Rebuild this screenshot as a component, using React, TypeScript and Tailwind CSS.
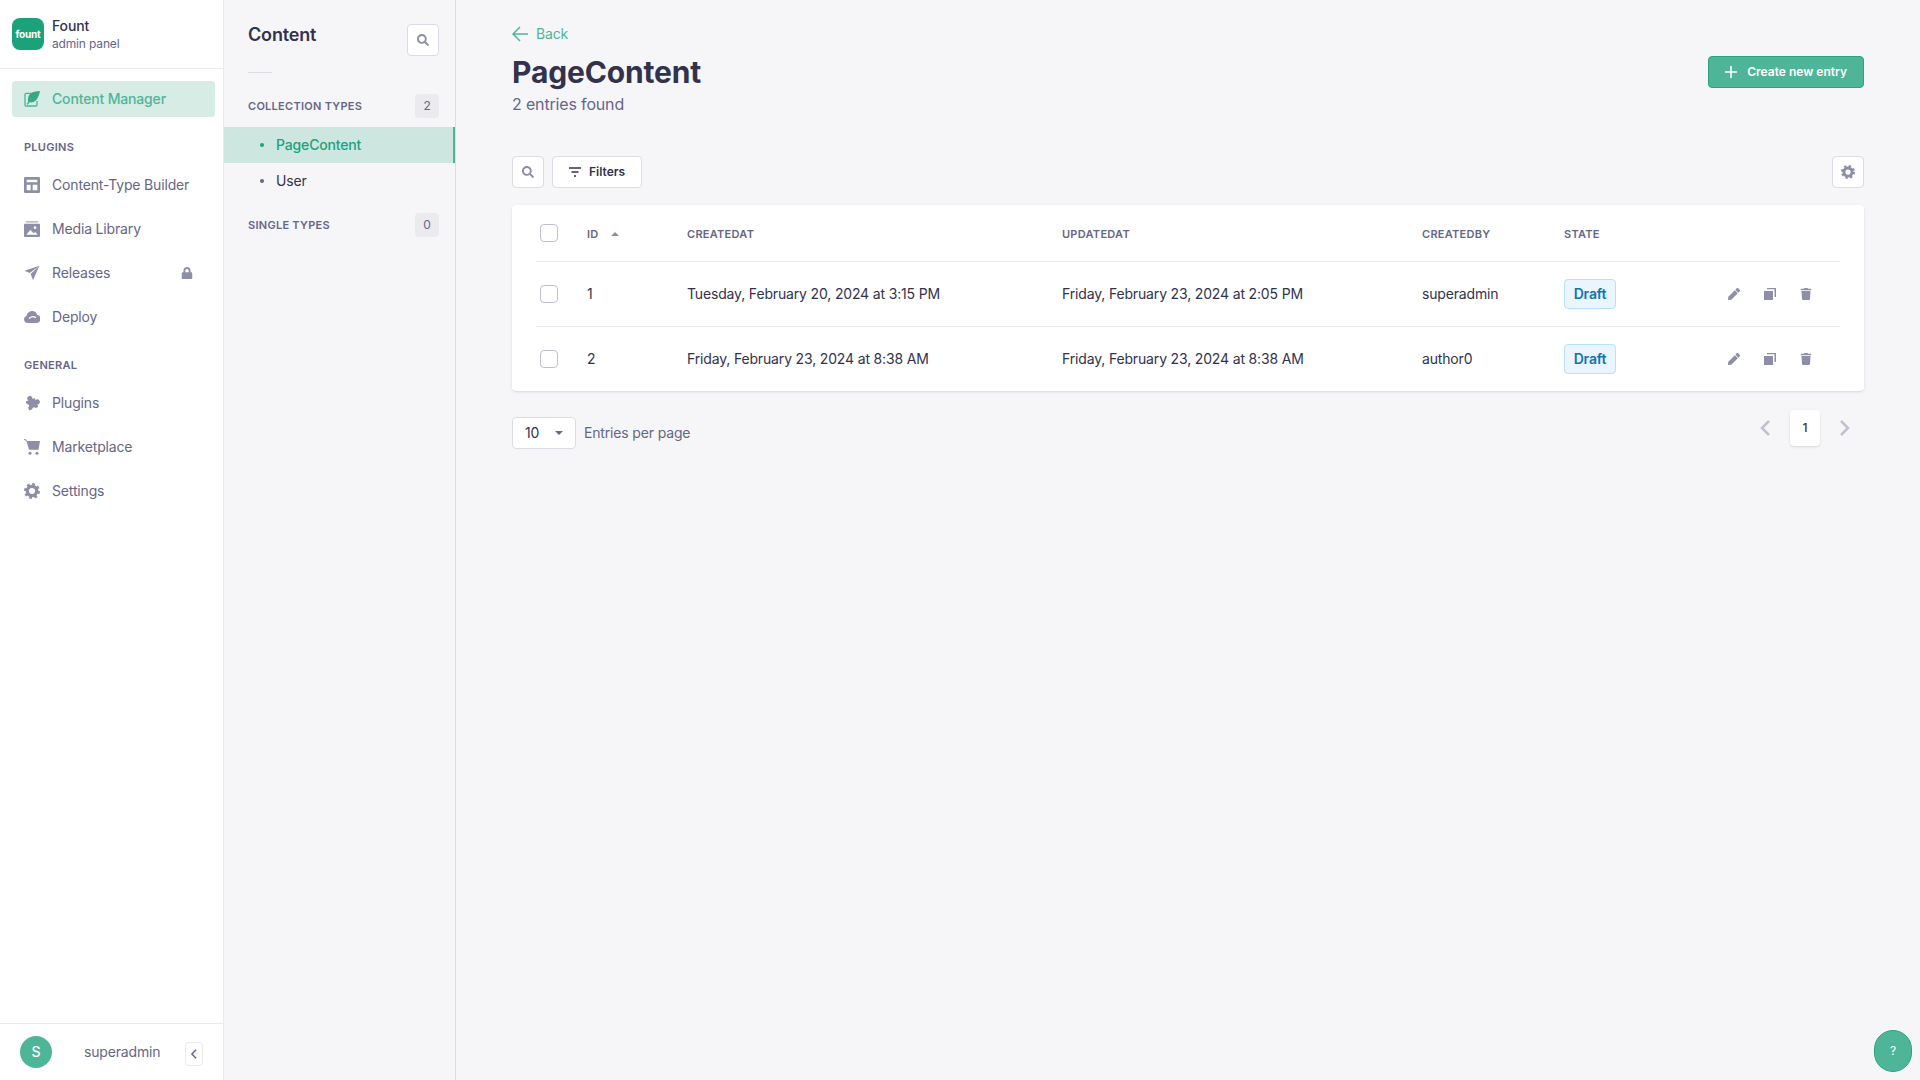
import type { ReactNode } from "react"
import { FaLock, FaPen, FaSearch, FaTrash } from "react-icons/fa"

function WriteIcon() {
  return (
    <svg viewBox="0 0 24 24" className="size-4 shrink-0">
      <path d="M11 3.500H3A1.500 1.500 0 0 0 1.500 5v16A1.500 1.500 0 0 0 3 22.500h15a1.500 1.500 0 0 0 1.500-1.500v-6" fill="none" stroke="currentColor" strokeWidth="2" />
      <path d="M24 0C14 .5 8 3 6.500 9 5.700 12 6 14.500 6.300 16L4 19.500l1.500 1 2.800-3.500C16 18.500 22 12 24 0z" fill="#36a886" />
    </svg>
  )
}

function LayoutIcon() {
  return (
    <svg viewBox="0 0 24 24" className="size-4 shrink-0 fill-current">
      <path fillRule="evenodd" d="M2 0h20a2 2 0 0 1 2 2v20a2 2 0 0 1-2 2H2a2 2 0 0 1-2-2V2a2 2 0 0 1 2-2zM4 4v4h16V4zM4 11.500V20h6v-8.500zM13 11.500V20h7v-8.500z" />
    </svg>
  )
}

function MediaIcon() {
  return (
    <svg viewBox="0 0 24 24" className="size-4 shrink-0 fill-current">
      <path d="M3 0h18v2.500H3z" opacity="0.6" />
      <path fillRule="evenodd" d="M1.500 4h21A1.500 1.500 0 0 1 24 5.500v17a1.500 1.500 0 0 1-1.500 1.500h-21A1.500 1.500 0 0 1 0 22.500v-17A1.500 1.500 0 0 1 1.500 4zM16.500 8a2 2 0 1 0 0 4 2 2 0 0 0 0-4zM3.500 20.500h17l-3.500-4-2.500 2-5-5.500z" />
    </svg>
  )
}

function PlaneIcon() {
  return (
    <svg viewBox="0 0 24 24" className="size-4 shrink-0 fill-current">
      <path d="M23 1 1 8.500l7.500 3.500L23 1zM23 1 10 13.500 13.500 23 23 1z" />
    </svg>
  )
}

function CloudIcon() {
  return (
    <svg viewBox="0 0 24 24" className="size-4 shrink-0">
      <path d="M5.500 21A5.500 5.500 0 0 1 3.500 10.400C5 5.500 8.500 3 12.500 3c3.500 0 6 2 7 5.500A6.300 6.300 0 0 1 18.500 21z" fill="currentColor" />
      <path d="M7.500 14.500c2-3 6.500-4 10.500-1.500" fill="none" stroke="white" strokeWidth="2" />
    </svg>
  )
}

function PuzzleIcon() {
  return (
    <svg viewBox="0 0 24 24" className="size-4 shrink-0">
      <g transform="rotate(-22 12 12)">
        <rect x="4" y="6.500" width="14.500" height="14.500" rx="1" fill="currentColor" />
        <circle cx="11.500" cy="4.500" r="3.800" fill="currentColor" />
        <circle cx="20" cy="13.500" r="3.800" fill="currentColor" />
        <circle cx="4" cy="13.500" r="2.600" fill="white" />
        <circle cx="11.500" cy="21.500" r="2.600" fill="white" />
      </g>
    </svg>
  )
}

function CartIcon() {
  return (
    <svg viewBox="0 0 24 24" className="size-4 shrink-0 fill-current">
      <path d="M0 0c2.500.3 4 1 4.800 3H24l-2.200 13H7.500L4 4C3.400 2.500 2 2 0 1.500z" />
      <circle cx="9" cy="21.500" r="2.300" />
      <circle cx="19.500" cy="21.500" r="2.300" />
    </svg>
  )
}

function GearIcon({ className }: { className: string }) {
  return (
    <svg viewBox="0 0 24 24" className={className} fill="none" stroke="currentColor">
      <circle cx="12" cy="12" r="7" strokeWidth="5" />
      <circle cx="12" cy="12" r="10" strokeWidth="4" strokeDasharray="4 3.850" />
    </svg>
  )
}

function CopyIcon() {
  return (
    <svg viewBox="0 0 24 24" className="size-3 fill-current">
      <path d="M0 6h18v18H0z" />
      <path d="M6 0h18v18h-3V2.500H6z" />
    </svg>
  )
}

function NavItem({ icon, label, locked }: { icon: ReactNode; label: string; locked?: boolean }) {
  return (
    <div className="ml-3 mr-2 flex h-9 items-center gap-3 px-3 text-sm text-[#666687]">
      <span className="text-[#8e8ea9]">{icon}</span>
      <span>{label}</span>
      {locked && <FaLock className="ml-auto mr-2.5 size-3 text-[#8e8ea9]" />}
    </div>
  )
}

function NavLabel({ children }: { children: string }) {
  return <div className="mb-3.5 mt-6 h-3 px-6 text-[11px] font-semibold uppercase leading-3 tracking-wide text-[#666687]">{children}</div>
}

function TypeHeading({ label, count }: { label: string; count: number }) {
  return (
    <div className="flex items-center justify-between pl-6 pr-4">
      <span className="text-[11px] font-semibold uppercase tracking-wide text-[#666687]">{label}</span>
      <span className="flex size-6 items-center justify-center rounded bg-[#eaeaef] text-xs text-[#666687]">{count}</span>
    </div>
  )
}

function IconButton({ children }: { children: ReactNode }) {
  return (
    <button className="flex size-8 items-center justify-center rounded border border-[#dcdce4] bg-white text-[#8e8ea9]">
      {children}
    </button>
  )
}

function Checkbox() {
  return <span className="block size-4.5 rounded border border-[#c0c0cf] bg-white" />
}

const grid = "grid grid-cols-[51px_100px_375px_360px_142px_1fr_auto] items-center"

const rows = [
  { id: 1, created: "Tuesday, February 20, 2024 at 3:15 PM", updated: "Friday, February 23, 2024 at 2:05 PM", by: "superadmin" },
  { id: 2, created: "Friday, February 23, 2024 at 8:38 AM", updated: "Friday, February 23, 2024 at 8:38 AM", by: "author0" },
]

export default function App() {
  return (
    <div className="relative flex h-screen overflow-hidden bg-[#f6f6f9] tracking-[-0.01em] [font-family:Inter,sans-serif]">
      <aside className="flex w-56 shrink-0 flex-col border-r border-[#eaeaef] bg-white">
        <div className="flex h-[69px] shrink-0 items-center gap-2 border-b border-[#eaeaef] px-3">
          <div className="flex size-8 items-center justify-center rounded-lg bg-[#1ba27a] text-[10px] font-bold text-white">fount</div>
          <div>
            <div className="text-sm font-medium leading-5 text-[#32324d]">Fount</div>
            <div className="text-xs leading-4 text-[#666687]">admin panel</div>
          </div>
        </div>
        <nav className="flex-1 pt-3">
          <div className="ml-3 mr-2 flex h-9 items-center gap-3 rounded bg-[#d6ece5] px-3 text-sm font-medium text-[#4fb598]">
            <WriteIcon />
            <span>Content Manager</span>
          </div>
          <NavLabel>Plugins</NavLabel>
          <div className="flex flex-col gap-2">
            <NavItem icon={<LayoutIcon />} label="Content-Type Builder" />
            <NavItem icon={<MediaIcon />} label="Media Library" />
            <NavItem icon={<PlaneIcon />} label="Releases" locked />
            <NavItem icon={<CloudIcon />} label="Deploy" />
          </div>
          <NavLabel>General</NavLabel>
          <div className="flex flex-col gap-2">
            <NavItem icon={<PuzzleIcon />} label="Plugins" />
            <NavItem icon={<CartIcon />} label="Marketplace" />
            <NavItem icon={<GearIcon className="size-4 shrink-0" />} label="Settings" />
          </div>
        </nav>
        <div className="flex h-[57px] shrink-0 items-center border-t border-[#eaeaef] pl-5 pr-5">
          <div className="flex size-8 items-center justify-center rounded-full bg-[#4fb598] text-sm font-medium text-white">S</div>
          <span className="ml-8 text-sm text-[#666687]">superadmin</span>
          <button className="ml-auto mt-1 flex h-6 w-4.5 items-center justify-center rounded border border-[#eaeaef] bg-white text-[#666687]">
            <svg viewBox="0 0 8 12" className="h-2.5 w-2" fill="none" stroke="currentColor" strokeWidth="1.800">
              <path d="M6.500 1 1.500 6l5 5" />
            </svg>
          </button>
        </div>
      </aside>

      <section className="w-[232px] shrink-0 border-r border-[#dcdce4] pt-6">
        <div className="flex items-start justify-between pl-6 pr-4">
          <h2 className="mt-px text-lg font-semibold leading-5 text-[#32324d]">Content</h2>
          <IconButton>
            <FaSearch className="size-3" />
          </IconButton>
        </div>
        <div className="ml-6 mt-4 h-px w-6 bg-[#dcdce4]" />
        <div className="mt-5 pt-px">
          <TypeHeading label="Collection Types" count={2} />
        </div>
        <div className="mt-2 pt-px">
          <div className="flex h-9 items-center gap-3 border-r-2 border-[#4fb598] bg-[#cde6e0] pl-9 text-sm font-medium text-[#1ba27a]">
            <span className="size-1 rounded-full bg-[#1ba27a]" />
            PageContent
          </div>
          <div className="flex h-9 items-center gap-3 pl-9 text-sm text-[#32324d]">
            <span className="size-1 rounded-full bg-[#666687]" />
            User
          </div>
        </div>
        <div className="mt-3.5">
          <TypeHeading label="Single Types" count={0} />
        </div>
      </section>

      <main className="min-w-0 flex-1 px-14 pt-6">
        <a className="flex items-center gap-2 text-sm leading-5 text-[#4fb598]">
          <svg viewBox="0 0 16 16" className="size-4" fill="none" stroke="currentColor" strokeWidth="1.500">
            <path d="M16 8H1M8 1 1 8l7 7" />
          </svg>
          Back
        </a>
        <div className="mt-2 flex items-start justify-between">
          <div>
            <h1 className="text-3xl font-bold leading-10 text-[#32324d]">PageContent</h1>
            <p className="text-base text-[#666687]">2 entries found</p>
          </div>
          <button className="mt-1 flex h-8 items-center gap-2.5 rounded border border-[#2aa57f] bg-[#4fb598] px-4 text-xs font-semibold tracking-normal text-white">
            <svg viewBox="0 0 12 12" className="size-3" fill="none" stroke="currentColor" strokeWidth="1.500">
              <path d="M6 0v12M0 6h12" />
            </svg>
            Create new entry
          </button>
        </div>

        <div className="mt-10 flex items-center gap-2 pb-px">
          <IconButton>
            <FaSearch className="size-3" />
          </IconButton>
          <button className="flex h-8 items-center gap-2 rounded border border-[#dcdce4] bg-white px-4 text-xs font-semibold tracking-normal text-[#32324d]">
            <svg viewBox="0 0 12 12" className="size-3" fill="none" stroke="currentColor" strokeWidth="1.500">
              <path d="M0 2h12M2.500 6h7M5 10h2" />
            </svg>
            Filters
          </button>
          <div className="ml-auto">
            <IconButton>
              <GearIcon className="size-3.5" />
            </IconButton>
          </div>
        </div>

        <div className="mt-4 rounded bg-white px-6 shadow-sm">
          <div className={`${grid} h-14 text-[11px] font-semibold uppercase tracking-wide text-[#666687]`}>
            <div className="pl-1">
              <Checkbox />
            </div>
            <div className="flex items-center gap-3 pt-0.5">
              ID
              <svg viewBox="0 0 8 4" className="h-1 w-2 fill-[#8e8ea9]">
                <path d="M0 4 4 0l4 4z" />
              </svg>
            </div>
            <div className="pt-0.5">CreatedAt</div>
            <div className="pt-0.5">UpdatedAt</div>
            <div className="pt-0.5">CreatedBy</div>
            <div className="pt-0.5">State</div>
            <div className="w-32" />
          </div>
          {rows.map((row) => (
            <div key={row.id} className={`${grid} box-content h-16 border-t border-[#eaeaef] text-sm text-[#32324d]`}>
              <div className="pl-1">
                <Checkbox />
              </div>
              <div>{row.id}</div>
              <div>{row.created}</div>
              <div>{row.updated}</div>
              <div>{row.by}</div>
              <div>
                <span className="inline-flex h-7.5 w-13 items-center justify-center rounded border border-[#b8e1ff] bg-[#eaf5ff] font-semibold text-[#0c75af]">Draft</span>
              </div>
              <div className="flex w-32 items-center pl-1 text-[#8e8ea9]">
                <span className="flex w-9 justify-center">
                  <FaPen className="size-3" />
                </span>
                <span className="flex w-9 justify-center">
                  <CopyIcon />
                </span>
                <span className="flex w-9 justify-center">
                  <FaTrash className="size-3" />
                </span>
              </div>
            </div>
          ))}
        </div>

        <div className="mt-5 flex items-start justify-between">
          <div className="mt-1.5 flex items-center gap-2">
            <div className="flex h-8 w-16 items-center justify-between rounded border border-[#dcdce4] bg-white px-3 text-sm text-[#32324d]">
              10
              <svg viewBox="0 0 8 4" className="h-1 w-2 fill-[#666687]">
                <path d="M0 0h8L4 4z" />
              </svg>
            </div>
            <span className="text-sm text-[#666687]">Entries per page</span>
          </div>
          <div className="-mt-px mr-3.5 flex items-center gap-5 text-[#c0c0cf]">
            <svg viewBox="0 0 10 16" className="h-4 w-2.5" fill="none" stroke="currentColor" strokeWidth="2.500">
              <path d="M9 1 2 8l7 7" />
            </svg>
            <span className="flex h-9 w-7.5 items-center justify-center rounded bg-white text-xs font-medium text-[#32324d] shadow-sm">1</span>
            <svg viewBox="0 0 10 16" className="h-4 w-2.5" fill="none" stroke="currentColor" strokeWidth="2.500">
              <path d="m1 1 7 7-7 7" />
            </svg>
          </div>
        </div>
      </main>

      <button className="absolute bottom-2 right-2 flex h-10.5 w-9.5 items-center justify-center rounded-full border border-[#2aa57f] bg-[#4fb598] text-xs text-white">?</button>
    </div>
  )
}
